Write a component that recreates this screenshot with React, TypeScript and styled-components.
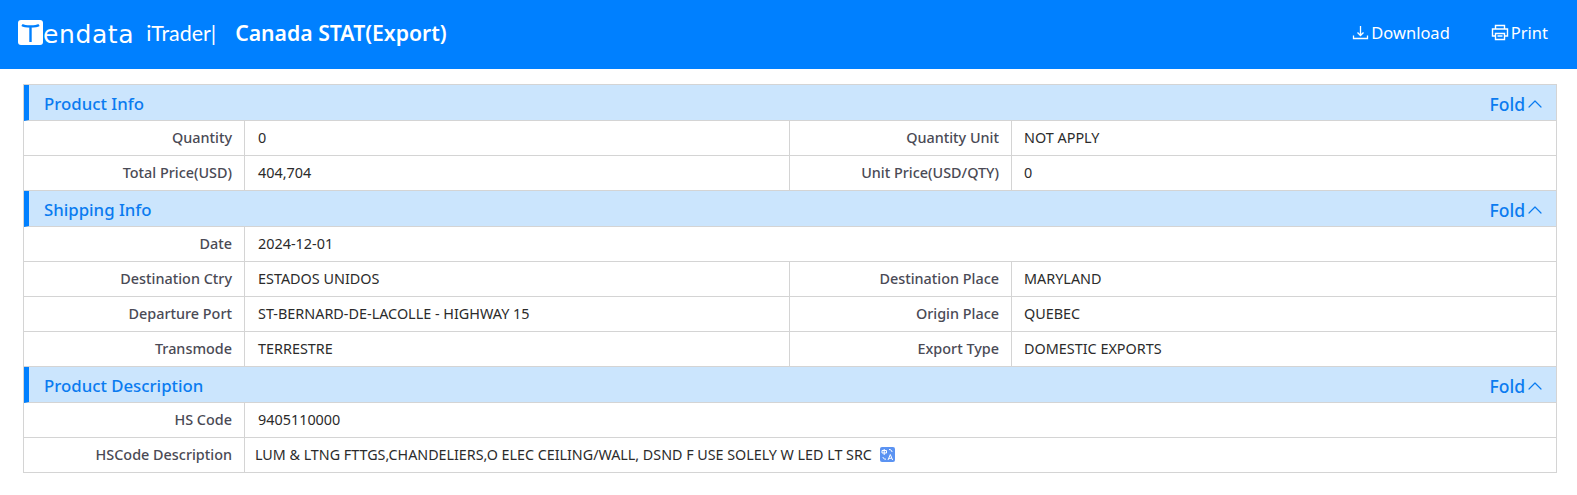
import React from "react";
import styled, { createGlobalStyle } from "styled-components";
import { FiChevronUp } from "react-icons/fi";

const GlobalStyle = createGlobalStyle`
  html, body {
    margin: 0;
    padding: 0;
    background: #fff;
    font-family: "Noto Sans", "Open Sans", sans-serif;
  }
`;

const Header = styled.header`
  height: 65px;
  background: #0080ff;
  color: #fff;
  display: flex;
  align-items: center;
  justify-content: space-between;
  padding: 0 29px 4px 18px;
`;

const Brand = styled.div`
  display: flex;
  align-items: center;
`;

const LogoBox = styled.div`
  width: 25px;
  height: 25px;
  background: #fff;
  border-radius: 3px;
  display: flex;
  align-items: center;
  justify-content: center;
`;

const LogoWord = styled.span`
  font-family: "DejaVu Sans", sans-serif;
  font-size: 25px;
  font-weight: 400;
  letter-spacing: 0.6px;
  line-height: 25px;
  margin-top: 3px;
`;

const Product = styled.span`
  font-family: "Lato", sans-serif;
  font-size: 21.4px;
  font-weight: 400;
  margin-left: 12px;
`;

const PageTitle = styled.h1`
  margin: 0 0 0 19px;
  font-size: 21.2px;
  font-weight: 600;
  line-height: 28px;
`;

const Actions = styled.div`
  display: flex;
  align-items: center;
  gap: 41px;
`;

const Action = styled.a`
  display: flex;
  align-items: center;
  gap: 2px;
  font-size: 16.5px;
  color: #fff;
`;

const Sheet = styled.main`
  margin: 15px 20px 0 23px;
  border: 1px solid #d4d4d4;
  border-bottom: 0;
`;

const SectionBar = styled.div`
  height: 35px;
  display: flex;
  align-items: center;
  justify-content: space-between;
  background: #cbe5fd;
  border-left: 5px solid #0080ff;
  border-bottom: 1px solid #d4d4d4;
  padding: 0 9px 0 15px;
  color: #0a7bf0;
`;

const SectionTitle = styled.h2`
  margin: 1px 0 0;
  font-size: 16.8px;
  font-weight: 500;
`;

const Fold = styled.span`
  display: flex;
  align-items: center;
  margin-top: 2px;
  font-size: 17.5px;
  font-weight: 500;

  svg {
    margin-left: -2px;
  }
`;

const Row = styled.div<{ $wide?: boolean }>`
  display: grid;
  grid-template-columns: ${(p) => (p.$wide ? "221px 1fr" : "221px 545px 222px 1fr")};
  height: 34px;
  border-bottom: 1px solid #d4d4d4;
  font-size: 14.4px;
`;

const Label = styled.div`
  display: flex;
  align-items: center;
  justify-content: flex-end;
  padding: 0 12px 2px 0;
  color: #4a4a55;
  font-weight: 500;
  border-right: 1px solid #d4d4d4;
`;

const Value = styled.div<{ $tight?: boolean; $ruled?: boolean; $inset?: number }>`
  display: flex;
  align-items: center;
  padding: 0 0 2px ${(p) => p.$inset ?? 13}px;
  font-size: ${(p) => (p.$tight ? "14.3px" : "14.4px")};
  color: #2b2b2b;
  border-right: ${(p) => (p.$ruled ? "1px solid #d4d4d4" : "0")};
`;

const TranslateBadge = styled.span`
  width: 15px;
  height: 15px;
  margin-left: 8px;
  display: inline-flex;
  border-radius: 2px;
  background: #5b93f2;
`;

type Cell = [string, string];

const sections: { title: string; rows: Cell[][] }[] = [
  {
    title: "Product Info",
    rows: [
      [["Quantity", "0"], ["Quantity Unit", "NOT APPLY"]],
      [["Total Price(USD)", "404,704"], ["Unit Price(USD/QTY)", "0"]],
    ],
  },
  {
    title: "Shipping Info",
    rows: [
      [["Date", "2024-12-01"]],
      [["Destination Ctry", "ESTADOS UNIDOS"], ["Destination Place", "MARYLAND"]],
      [["Departure Port", "ST-BERNARD-DE-LACOLLE - HIGHWAY 15"], ["Origin Place", "QUEBEC"]],
      [["Transmode", "TERRESTRE"], ["Export Type", "DOMESTIC EXPORTS"]],
    ],
  },
  {
    title: "Product Description",
    rows: [[["HS Code", "9405110000"]]],
  },
];

function Translate() {
  return (
    <TranslateBadge>
      <svg width="15" height="15" viewBox="0 0 15 15" fill="none" stroke="#fff" strokeWidth="1">
        <path d="M2 3.5h4.5v2.5H2zM4.2 2v6" />
        <path d="M9 2.5c1.5 0 3 .8 3 2.5M3 10c0 1.4 1 2.2 3 2.2" />
        <path d="M8 13l2.3-5.5L12.6 13M8.9 11.3h2.8" />
      </svg>
    </TranslateBadge>
  );
}

export default function App() {
  return (
    <>
      <GlobalStyle />
      <Header>
        <Brand>
          <LogoBox>
            <svg width="21" height="21" viewBox="0 0 21 21" fill="none" stroke="#0080ff" strokeWidth="2.4">
              <path d="M2 3c3 2 14 2 17 0M10.5 5v15" />
            </svg>
          </LogoBox>
          <LogoWord>endata</LogoWord>
          <Product>iTrader|</Product>
          <PageTitle>Canada STAT(Export)</PageTitle>
        </Brand>
        <Actions>
          <Action>
            <svg width="17" height="17" viewBox="0 0 17 17" fill="none" stroke="#fff" strokeWidth="1.3">
              <path d="M8.5 2v9M5.5 8.5l3 3 3-3M1.5 11.5v3h14v-3" />
            </svg>
            Download
          </Action>
          <Action>
            <svg width="18" height="17" viewBox="0 0 18 17" fill="none" stroke="#fff" strokeWidth="1.4">
              <path d="M4.5 5V1.5h9V5M4.5 12H1.5V5h15v7h-3" />
              <path d="M4.5 9.5h9v6h-9zM6.5 12h5" />
            </svg>
            Print
          </Action>
        </Actions>
      </Header>
      <Sheet>
        {sections.map((section) => (
          <React.Fragment key={section.title}>
            <SectionBar>
              <SectionTitle>{section.title}</SectionTitle>
              <Fold>
                Fold
                <FiChevronUp size={24} strokeWidth={1.2} />
              </Fold>
            </SectionBar>
            {section.rows.map((row) => (
              <Row key={row[0][0]} $wide={row.length === 1}>
                {row.map(([label, value], i) => (
                  <React.Fragment key={label}>
                    <Label>{label}</Label>
                    <Value $ruled={row.length === 2 && i === 0} $inset={i === 1 ? 12 : 13}>
                      {value}
                    </Value>
                  </React.Fragment>
                ))}
              </Row>
            ))}
          </React.Fragment>
        ))}
        <Row $wide>
          <Label>HSCode Description</Label>
          <Value $tight $inset={10}>
            LUM &amp; LTNG FTTGS,CHANDELIERS,O ELEC CEILING/WALL, DSND F USE SOLELY W LED LT SRC
            <Translate />
          </Value>
        </Row>
      </Sheet>
    </>
  );
}
